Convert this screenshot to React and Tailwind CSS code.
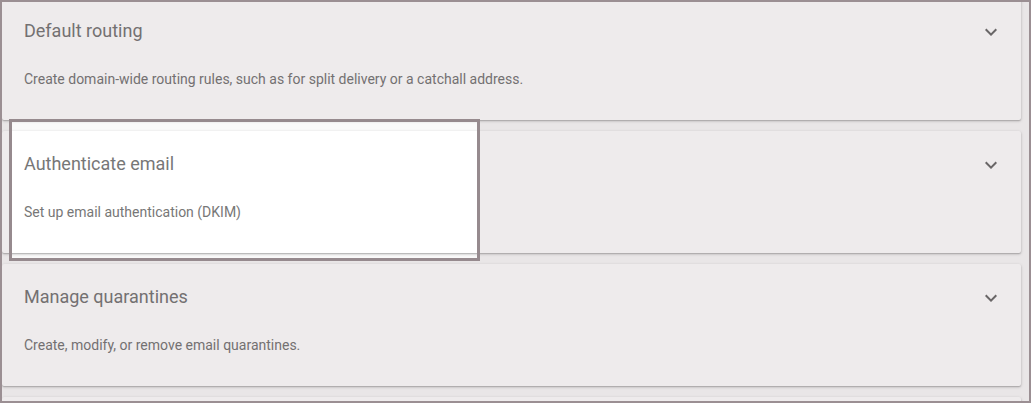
import React from 'react';

const panels = [
  { title: 'Default routing', desc: 'Create domain-wide routing rules, such as for split delivery or a catchall address.' },
  { title: 'Authenticate email', desc: 'Set up email authentication (DKIM)' },
  { title: 'Manage quarantines', desc: 'Create, modify, or remove email quarantines.' },
  { title: '', desc: '' },
];

const Chevron = () => (
  <svg width="24" height="24" viewBox="0 0 24 24" className="fill-[#6b6b6b]">
    <path d="M16.59 8.59 12 13.17 7.41 8.59 6 10l6 6 6-6z" />
  </svg>
);

const Panel = ({ title, desc }) => (
  <div className="h-[122px] w-[1019px] shrink-0 rounded-[2px] bg-white pl-[22px] pr-[18px] shadow-[0_1px_3px_rgba(0,0,0,0.25),0_1px_1px_rgba(0,0,0,0.12)]">
    <div className="flex h-[45px] items-end justify-between">
      <h3 className="text-[18px] leading-[24px] text-[#777777]">{title}</h3>
      <div className="mb-[-1px]">
        <Chevron />
      </div>
    </div>
    <p className="mt-[26px] text-[14px] leading-[20px] text-[#777777]">{desc}</p>
  </div>
);

export default function App() {
  return (
    <div
      className="relative h-[403px] w-[1031px] overflow-hidden border-2 border-[#9b8f93] bg-[#fafafa]"
      style={{ fontFamily: 'Roboto, "Liberation Sans", sans-serif' }}
    >
      <div className="-mt-[4px] flex flex-col gap-[11px]">
        {panels.map((p, idx) => (
          <Panel key={idx} title={p.title} desc={p.desc} />
        ))}
      </div>

      {/* spotlight over the "Authenticate email" panel */}
      <div className="pointer-events-none absolute left-[7px] top-[117px] h-[142px] w-[471px] border-[3px] border-[#968a8e] shadow-[0_0_0_2000px_rgba(85,55,65,0.1)]" />
    </div>
  );
}
